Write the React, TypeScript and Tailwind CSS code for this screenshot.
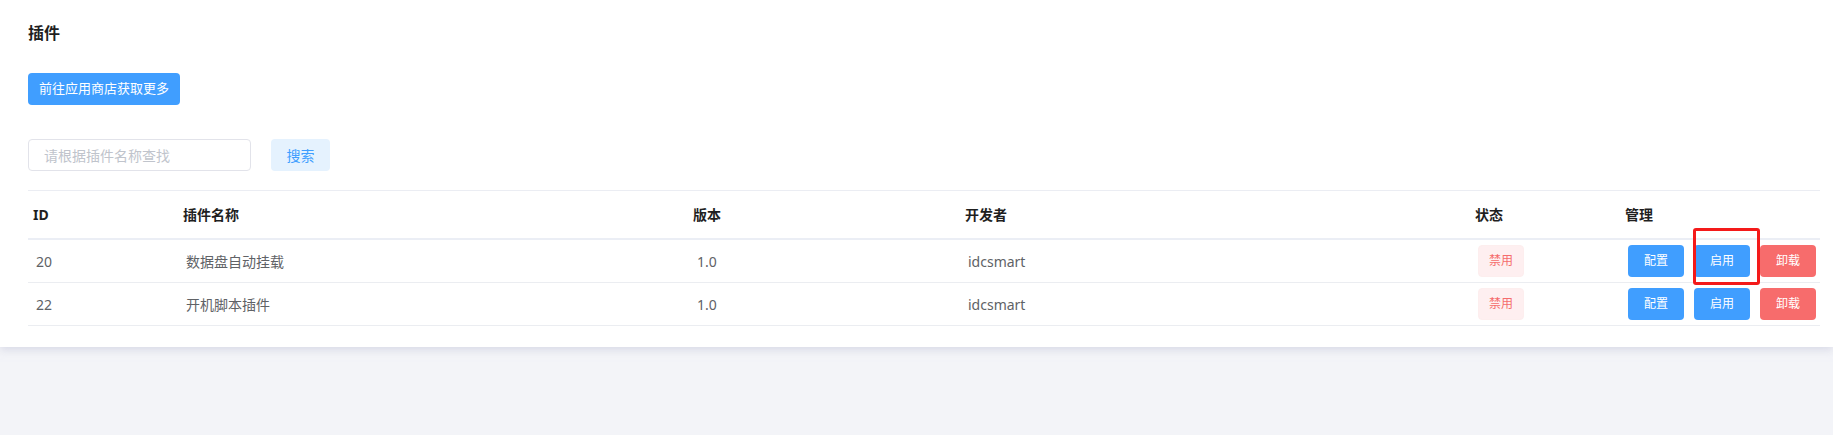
import React from "react";

type Plugin = { id: number; name: string; version: string; author: string };

const plugins: Plugin[] = [
  { id: 20, name: "数据盘自动挂载", version: "1.0", author: "idcsmart" },
  { id: 22, name: "开机脚本插件", version: "1.0", author: "idcsmart" },
];

const cols = "grid grid-cols-[150px_510px_272px_510px_150px_1fr]";

function ActionButton({
  label,
  tone,
}: {
  label: string;
  tone: "blue" | "red";
}) {
  return (
    <button
      className={
        tone === "blue"
          ? "h-8 w-14 rounded-[4px] bg-[#409eff] text-[12px] text-white"
          : "h-8 w-14 rounded-[4px] bg-[#f76c6c] text-[12px] text-white"
      }
    >
      {label}
    </button>
  );
}

export default function App() {
  return (
    <div
      className="min-h-screen bg-[#f3f4f8]"
      style={{ fontFamily: '"Noto Sans", "Noto Sans CJK SC", sans-serif' }}
    >
      <div className="bg-white px-[28px] pt-[21px] pb-[21px] shadow-[0_3px_8px_rgba(200,202,220,0.6)]">
        <h1 className="h-6 text-[16px] font-bold leading-6 text-[#1f1f1f]">插件</h1>

        <button className="mt-[28px] h-8 w-[152px] rounded-[4px] bg-[#409eff] text-[13px] text-white">
          前往应用商店获取更多
        </button>

        <div className="mt-[34px] flex items-center gap-[20px]">
          <input
            placeholder="请根据插件名称查找"
            className="h-8 w-[223px] rounded-[4px] border border-[#e2e3ea] pl-[15px] text-[14px] text-[#606266] outline-none placeholder:text-[#c0c4cc]"
          />
          <button className="h-8 w-[59px] rounded-[4px] bg-[#e5f2fe] text-[14px] text-[#409eff]">
            搜索
          </button>
        </div>

        <div className="mt-[19px] w-[1792px] border-t border-[#ebedf3]">
          <div
            className={`${cols} h-[49px] items-center border-b-2 border-[#ebeef5] text-[14px] font-bold text-[#1f1f1f]`}
          >
            <div className="pl-[5px]">ID</div>
            <div className="pl-[5px]">插件名称</div>
            <div className="pl-[5px]">版本</div>
            <div className="pl-[5px]">开发者</div>
            <div className="pl-[5px]">状态</div>
            <div className="pl-[5px]">管理</div>
          </div>

          {plugins.map((p, i) => (
            <div
              key={p.id}
              className={`${cols} h-[43px] items-center border-b border-[#ebedf1] text-[14px] text-[#606266]`}
            >
              <div className="pl-[8px]">{p.id}</div>
              <div className="pl-[8px]">{p.name}</div>
              <div className="pl-[9px]">{p.version}</div>
              <div className="pl-[8px]">{p.author}</div>
              <div className="pl-[8px]">
                <span className="flex h-8 w-[46px] items-center justify-center rounded-[4px] border border-[#fdeeee] bg-[#feeff0] text-[12px] text-[#f56c6c]">
                  禁用
                </span>
              </div>
              <div className="flex items-center gap-[10px] pl-[8px]">
                <ActionButton label="配置" tone="blue" />
                <div className="relative flex">
                  <ActionButton label="启用" tone="blue" />
                  {i === 0 && (
                    <span className="pointer-events-none absolute -top-[17px] -bottom-[8px] -left-[1px] -right-[10px] rounded-[3px] border-[3px] border-[#f41a1a]" />
                  )}
                </div>
                <ActionButton label="卸载" tone="red" />
              </div>
            </div>
          ))}
        </div>
      </div>
    </div>
  );
}
